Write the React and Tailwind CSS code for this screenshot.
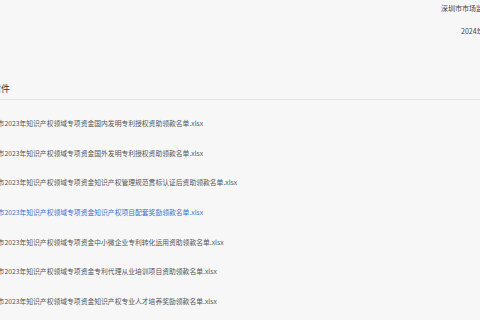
import React from "react";

const files = [
  "深圳市2023年知识产权领域专项资金国内发明专利授权资助领款名单.xlsx",
  "深圳市2023年知识产权领域专项资金国外发明专利授权资助领款名单.xlsx",
  "深圳市2023年知识产权领域专项资金知识产权管理规范贯标认证后资助领款名单.xlsx",
  "深圳市2023年知识产权领域专项资金知识产权项目配套奖励领款名单.xlsx",
  "深圳市2023年知识产权领域专项资金中小微企业专利转化运用资助领款名单.xlsx",
  "深圳市2023年知识产权领域专项资金专利代理从业培训项目资助领款名单.xlsx",
  "深圳市2023年知识产权领域专项资金知识产权专业人才培养奖励领款名单.xlsx",
];

export default function App() {
  return (
    <div
      className="w-[480px] h-[320px] overflow-hidden bg-[#f7f7f7] text-[#555]"
      style={{ fontFamily: '"Noto Sans CJK SC", "Noto Sans", sans-serif' }}
    >
      <div className="flex flex-col items-end pt-[4px] text-[7px] leading-[9px] text-[#444]">
        <div className="w-[39px] whitespace-nowrap">深圳市市场监督管理局</div>
        <div className="w-[19px] mt-[14px] whitespace-nowrap">2024年</div>
      </div>

      <div className="ml-[-8px] mt-[47px] text-[9px] leading-[12px] text-[#333] pb-[4px] border-b border-[#e4e4e4]">
        附件
      </div>

      <ul className="ml-[-16px] pt-[9px]">
        {files.map((f, i) => (
          <li
            key={i}
            className={`h-[29.6px] flex items-center whitespace-nowrap text-[6.8px] leading-[9px] ${
              i === 3 ? "text-[#3a6fd4]" : "text-[#555]"
            }`}
          >
            {f}
          </li>
        ))}
      </ul>
    </div>
  );
}
